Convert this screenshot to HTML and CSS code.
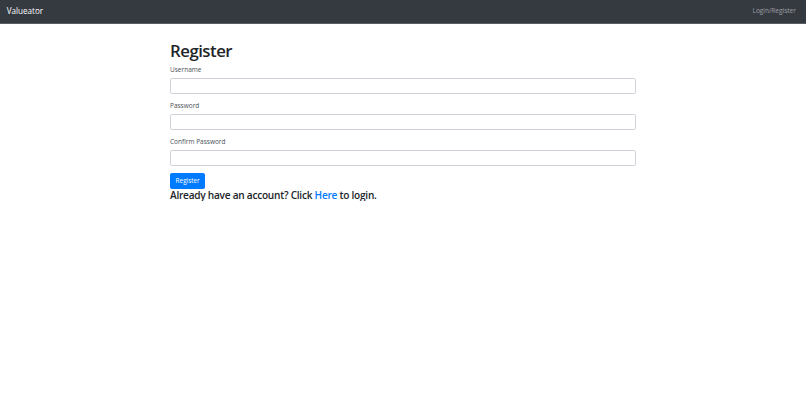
FILE: index.html
```html
<!DOCTYPE html>
<html lang="en">
<head>
<meta charset="utf-8">
<title>Valueator - Register</title>
<link rel="stylesheet" href="styles.css">
</head>
<body>
<nav class="navbar">
  <a class="brand" href="#">Valueator</a>
  <a class="nav-link" href="#">Login/Register</a>
</nav>
<main class="container">
  <h1 class="title">Register</h1>
  <form class="form">
    <div class="form-group">
      <label class="label" for="username">Username</label>
      <input class="input" id="username" type="text">
    </div>
    <div class="form-group">
      <label class="label" for="password">Password</label>
      <input class="input" id="password" type="password">
    </div>
    <div class="form-group">
      <label class="label" for="confirm">Confirm Password</label>
      <input class="input" id="confirm" type="password">
    </div>
    <button class="btn" type="submit">Register</button>
  </form>
  <h4 class="hint">Already have an account? Click <a class="link" href="#">Here</a> to login.</h4>
</main>
</body>
</html>
```
FILE: styles.css
```css
* { box-sizing: border-box; }
html, body { margin: 0; padding: 0; }
body {
  font-family: "Open Sans", "Noto Sans", "Liberation Sans", sans-serif;
  font-size: 6.7px;
  line-height: 1.5;
  color: #212529;
  background: #fff;
}
.navbar {
  display: flex;
  align-items: center;
  justify-content: space-between;
  height: 23.5px;
  padding: 0 6.7px;
  background: #343a40;
  border-bottom: 1px solid #585d63;
}
.brand {
  color: #fff;
  font-size: 8.1px;
  text-decoration: none;
}
.nav-link {
  color: rgba(255, 255, 255, 0.5);
  font-size: 6.5px;
  padding: 0 3.4px;
  text-decoration: none;
}
.container {
  width: 466px;
  margin: 0 auto;
  padding-top: 17.5px;
}
.title {
  margin: 0 0 3.4px;
  font-size: 16.8px;
  font-weight: 600;
  line-height: 1.2;
  letter-spacing: -0.5px;
}
.form-group { margin-bottom: 6.7px; }
.label {
  display: block;
  margin-bottom: 3.4px;
  line-height: 10px;
  font-size: 6.5px;
  color: #4a4f55;
}
.input {
  display: block;
  width: 100%;
  height: 16px;
  margin: 0;
  padding: 0 5px;
  border: 1px solid #ced4da;
  border-radius: 1.7px;
  background: #fff;
  font: inherit;
}
.btn {
  display: inline-block;
  height: 16px;
  padding: 0 4.6px;
  border: 1px solid #007bff;
  border-radius: 1.7px;
  background: #007bff;
  color: #fff;
  font-family: inherit;
  font-size: 6.4px;
  line-height: 1;
}
.form { margin: 0; }
.hint {
  margin: 0;
  font-size: 10.1px;
  font-weight: 600;
  line-height: 1.2;
  letter-spacing: -0.25px;
}
.link { color: #007bff; text-decoration: none; }
```
